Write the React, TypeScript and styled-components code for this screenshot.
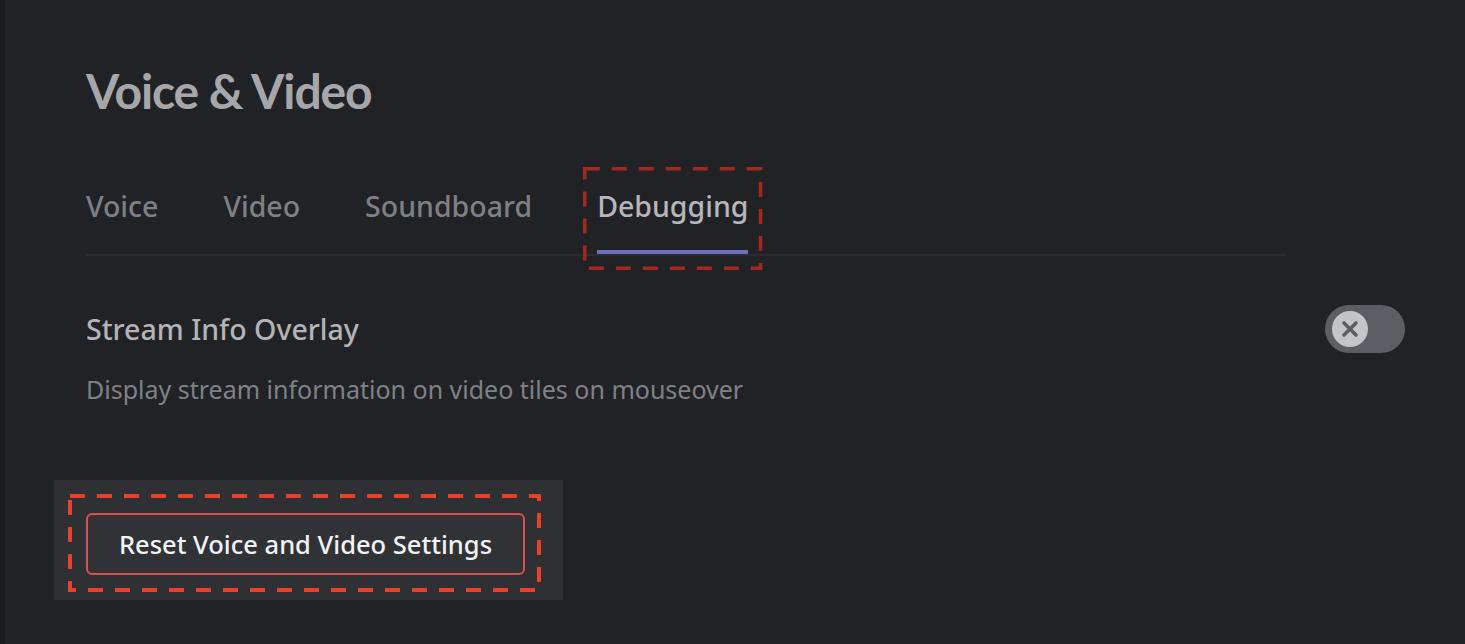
import React from "react";
import styled, { createGlobalStyle } from "styled-components";

const GlobalStyle = createGlobalStyle`
  html, body {
    margin: 0;
    padding: 0;
    background: #212226;
  }
  body {
    font-family: "Noto Sans", "Open Sans", "Liberation Sans", sans-serif;
    -webkit-font-smoothing: antialiased;
  }
  * { box-sizing: border-box; }
`;

const Page = styled.div`
  display: flex;
  min-height: 644px;
  background: #212226;
`;

const Rail = styled.div`
  width: 5px;
  flex: none;
  background: #1b1c1f;
`;

const Content = styled.main`
  flex: 1;
  padding: 62px 0 0 81px;
  display: flex;
  flex-direction: column;
  align-items: flex-start;
`;

const Title = styled.h1`
  margin: 0;
  font-family: Lato, "Noto Sans", sans-serif;
  font-size: 48px;
  line-height: 58px;
  font-weight: 700;
  letter-spacing: -1.1px;
  color: #a6a7ab;
`;

const TabList = styled.div`
  margin-top: 66px;
  width: 1199px;
  display: flex;
  gap: 65px;
  border-bottom: 2px solid #2b2c30;
`;

const Tab = styled.div<{ $active?: boolean }>`
  position: relative;
  font-size: 28.5px;
  line-height: 40px;
  font-weight: 500;
  padding-bottom: 24px;
  color: ${(p) => (p.$active ? "#b6b7ba" : "#7e8085")};
  border-bottom: 4px solid ${(p) => (p.$active ? "#6c70b8" : "transparent")};
`;

const FrameSvg = styled.svg<{ $t: number; $r: number; $b: number; $l: number }>`
  position: absolute;
  top: ${(p) => -p.$t}px;
  left: ${(p) => -p.$l}px;
  width: calc(100% + ${(p) => p.$l + p.$r}px);
  height: calc(100% + ${(p) => p.$t + p.$b}px);
  overflow: visible;
  pointer-events: none;
`;

const FrameRect = styled.rect<{ $sw: number }>`
  x: ${(p) => p.$sw / 2}px;
  y: ${(p) => p.$sw / 2}px;
  width: calc(100% - ${(p) => p.$sw}px);
  height: calc(100% - ${(p) => p.$sw}px);
`;

function DashedFrame({
  t,
  r,
  b,
  l,
  color,
  sw,
}: {
  t: number;
  r: number;
  b: number;
  l: number;
  color: string;
  sw: number;
}) {
  return (
    <FrameSvg $t={t} $r={r} $b={b} $l={l}>
      <FrameRect
        $sw={sw}
        fill="none"
        stroke={color}
        strokeWidth={sw}
        strokeDasharray="15 12"
      />
    </FrameSvg>
  );
}

const SettingRow = styled.section`
  margin-top: 49px;
  width: 1319px;
  display: flex;
  flex-direction: column;
  gap: 20px;
`;

const SettingHead = styled.div`
  display: flex;
  align-items: center;
  justify-content: space-between;
`;

const SettingTitle = styled.div`
  font-size: 28.5px;
  line-height: 40px;
  font-weight: 500;
  color: #b3b4b7;
`;

const SettingDesc = styled.div`
  font-size: 25px;
  line-height: 32px;
  color: #7f8186;
`;

const Switch = styled.div`
  width: 80px;
  height: 48px;
  border-radius: 24px;
  background: #5c5e64;
  display: flex;
  align-items: center;
  padding-left: 7px;
`;

const Knob = styled.div`
  width: 36px;
  height: 36px;
  border-radius: 50%;
  background: #c4c5c8;
  display: flex;
  align-items: center;
  justify-content: center;
`;

const Highlight = styled.div`
  margin-top: 75px;
  margin-left: -32px;
  background: #2f3034;
  padding: 14px 22px 8px 14px;
`;

const FramedArea = styled.div`
  position: relative;
  padding: 19px 16px 17px 18px;
`;

const DangerButton = styled.button`
  width: 439px;
  height: 62px;
  border: 2px solid #d5504e;
  border-radius: 6px;
  background: #313236;
  color: #f2f3f5;
  font-family: inherit;
  font-size: 25.5px;
  font-weight: 500;
  display: flex;
  align-items: center;
  justify-content: center;
  cursor: pointer;
`;

export default function App() {
  return (
    <>
      <GlobalStyle />
      <Page>
        <Rail />
        <Content>
          <Title>Voice &amp; Video</Title>
          <TabList>
            <Tab>Voice</Tab>
            <Tab>Video</Tab>
            <Tab>Soundboard</Tab>
            <Tab $active>
              Debugging
              <DashedFrame t={19} r={14} b={20} l={14} color="#a3281d" sw={3.5} />
            </Tab>
          </TabList>
          <SettingRow>
            <SettingHead>
              <SettingTitle>Stream Info Overlay</SettingTitle>
              <Switch>
                <Knob>
                  <svg width="18" height="18" viewBox="0 0 18 18">
                    <path
                      d="M3 3 L15 15 M15 3 L3 15"
                      stroke="#5c5e64"
                      strokeWidth="3.6"
                      strokeLinecap="round"
                    />
                  </svg>
                </Knob>
              </Switch>
            </SettingHead>
            <SettingDesc>Display stream information on video tiles on mouseover</SettingDesc>
          </SettingRow>
          <Highlight>
            <FramedArea>
              <DashedFrame t={0} r={0} b={0} l={0} color="#e8402a" sw={4} />
              <DangerButton>Reset Voice and Video Settings</DangerButton>
            </FramedArea>
          </Highlight>
        </Content>
      </Page>
    </>
  );
}
